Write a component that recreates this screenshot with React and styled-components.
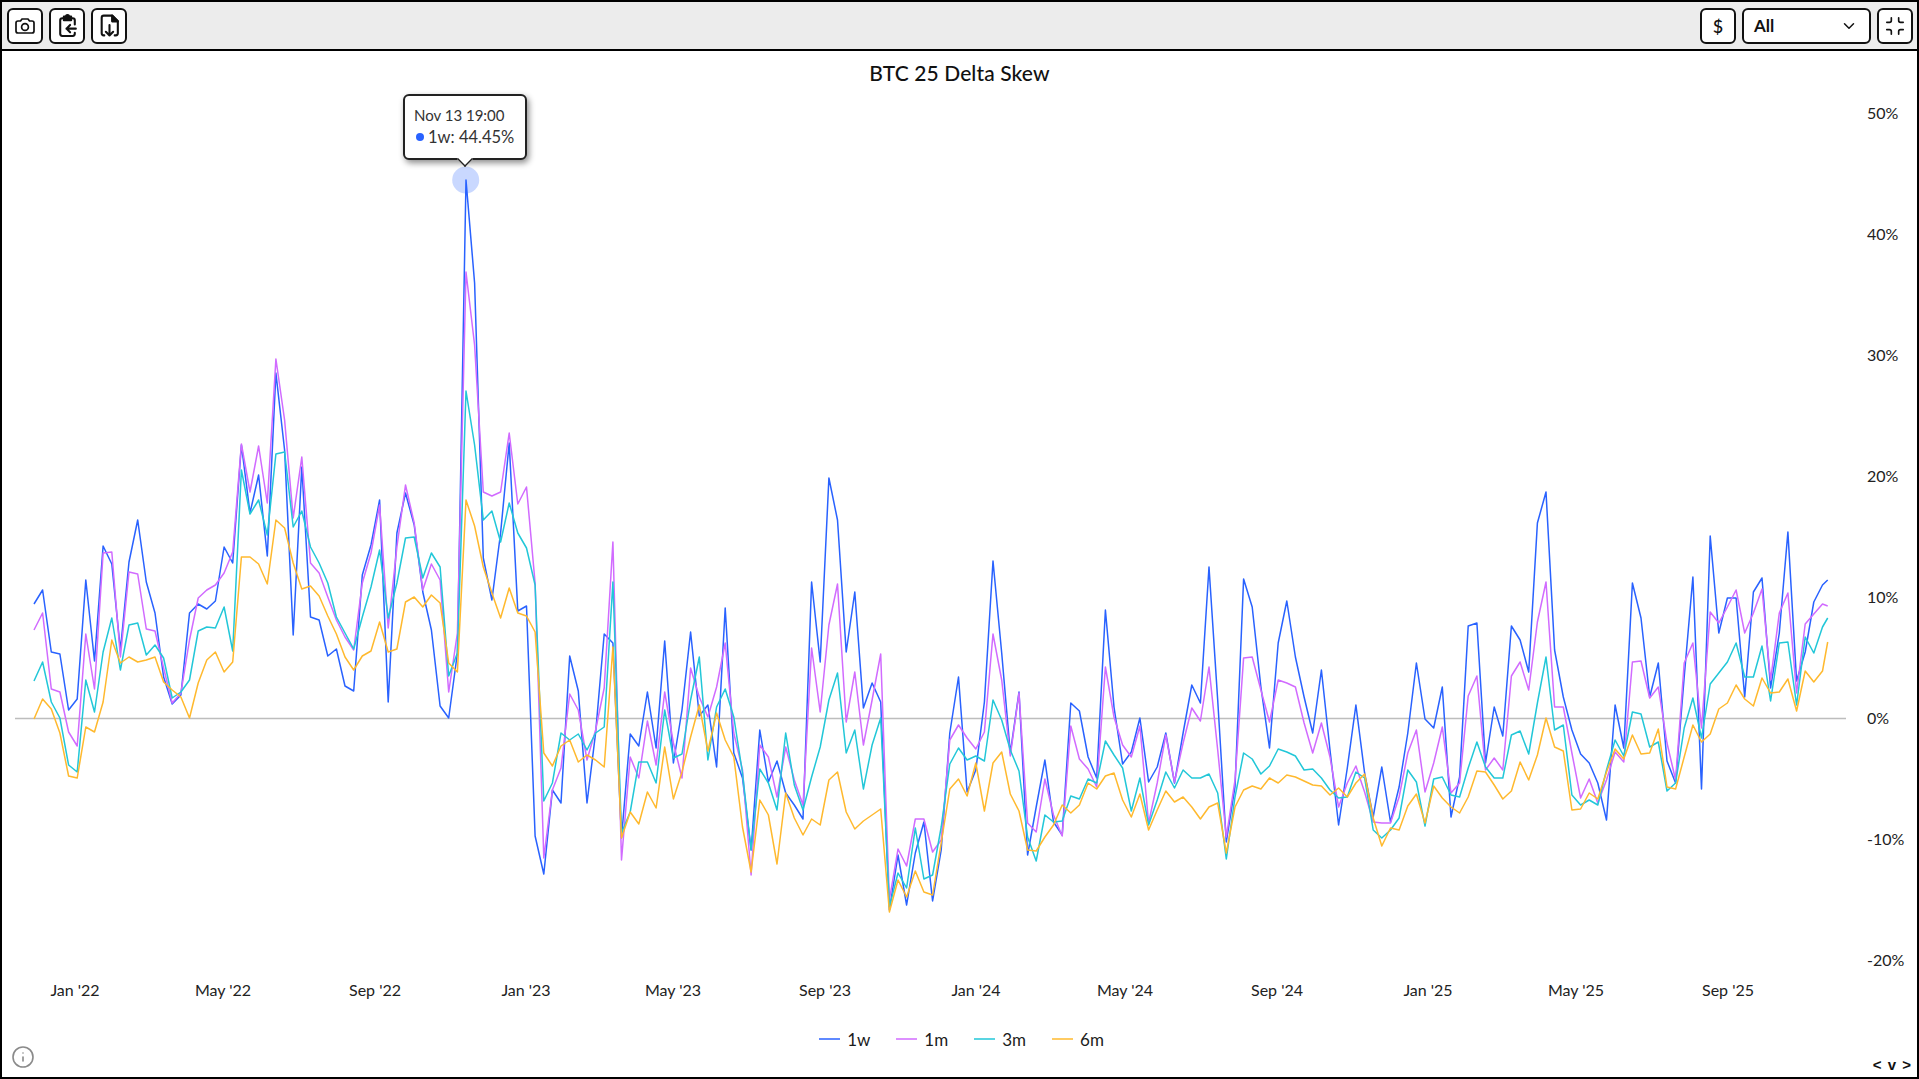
import React from 'react'
import styled, { createGlobalStyle } from 'styled-components'
import { ChevronDown, Info, Minimize } from 'lucide-react'

// y values are plot pixels, one point per week
const blue = [604,590,652,654,710,699,580,661,546,564,650,562,520,582,613,677,704,695,613,604,609,601,547,563,445,513,475,556,373,450,635,467,617,620,656,649,686,691,575,545,500,702,533,493,525,592,630,706,718,653,180,283,558,600,533,443,611,606,836,874,790,803,656,691,803,733,634,643,838,734,746,692,748,641,763,710,632,716,705,767,608,753,778,850,730,782,761,793,805,819,582,662,478,520,652,592,708,683,702,910,855,905,853,822,901,850,733,677,792,770,702,561,653,753,692,855,807,760,822,835,703,711,757,778,610,707,764,752,718,782,767,733,783,733,685,703,567,700,842,787,579,607,687,748,643,601,657,697,733,670,750,825,768,705,773,817,767,822,787,733,663,719,728,687,817,777,626,623,763,707,736,626,640,672,523,492,650,697,730,754,763,783,820,705,748,583,618,697,663,761,783,677,577,789,536,633,598,598,697,592,578,688,633,532,681,652,602,585,580]
const magenta = [630,613,689,692,732,746,634,689,553,552,657,572,574,629,631,668,703,693,640,598,590,585,573,552,444,492,446,503,359,420,518,457,563,573,597,620,637,650,583,553,505,628,547,485,523,590,564,580,692,633,272,345,492,496,492,433,504,487,583,858,790,768,694,710,760,730,688,542,860,757,778,721,765,692,743,778,668,697,717,687,643,733,770,875,745,757,797,747,780,805,648,712,625,584,722,672,745,700,654,900,849,866,819,819,852,840,740,725,738,749,732,634,680,756,693,823,832,779,815,836,726,759,769,787,667,717,745,757,726,823,783,735,782,743,708,721,667,750,837,780,658,657,690,722,680,683,687,723,753,723,757,807,783,766,792,822,823,823,797,753,730,792,763,727,793,783,696,676,770,758,770,676,662,690,622,582,707,707,753,798,779,803,780,752,762,662,661,698,687,743,780,663,643,728,612,623,607,590,633,613,589,680,613,593,693,624,614,604,606]
const teal = [681,662,702,718,765,772,680,712,652,618,670,625,623,655,645,658,698,692,680,631,627,628,607,651,470,514,500,535,454,452,527,511,547,563,583,617,633,649,617,587,550,618,583,538,537,578,553,567,676,653,391,445,520,511,542,503,533,548,585,801,783,733,740,734,750,733,727,582,833,812,762,762,783,710,758,754,700,657,760,707,689,717,773,850,769,783,810,733,785,810,777,747,700,673,753,730,789,745,718,907,873,888,828,879,875,827,764,748,760,756,761,700,720,750,771,837,861,815,822,821,796,799,779,783,741,755,768,811,778,825,800,772,788,770,778,778,774,793,859,797,753,759,774,766,749,752,756,770,769,778,790,798,797,772,778,830,838,830,818,770,782,826,779,777,795,797,768,742,767,778,778,735,731,754,703,657,730,725,795,805,800,805,770,740,756,712,714,747,742,791,783,728,698,738,684,673,662,643,677,677,646,701,643,642,705,637,653,627,618]
const orange = [719,699,709,733,776,778,727,732,702,640,663,657,662,660,657,682,690,697,718,683,660,652,672,662,557,557,564,584,520,528,563,589,586,596,616,634,657,670,656,651,622,652,649,602,597,607,595,603,663,672,500,526,567,593,618,588,613,616,632,753,766,746,740,762,755,760,767,647,838,812,824,792,808,747,799,772,737,705,751,713,740,757,827,872,800,815,864,793,818,835,819,825,780,772,812,829,821,815,809,912,880,897,871,892,895,843,789,779,796,763,811,763,752,794,811,850,851,837,825,805,813,805,783,789,776,773,800,817,794,830,810,791,802,797,807,819,807,803,853,807,790,786,789,778,783,775,777,781,785,786,795,788,797,783,774,818,846,828,830,806,794,823,786,798,807,813,797,771,772,785,799,791,762,780,755,718,747,751,810,809,793,799,772,749,759,735,754,753,729,787,789,757,725,742,734,709,703,685,699,706,678,693,692,679,711,671,682,671,642]

const series = [
  { name: '1w', color: '#2962ff', points: blue },
  { name: '1m', color: '#d16bff', points: magenta },
  { name: '3m', color: '#22c7d8', points: teal },
  { name: '6m', color: '#ffb92e', points: orange },
]

const xTicks = [
  ['Jan \'22', 75], ['May \'22', 223], ['Sep \'22', 375], ['Jan \'23', 526],
  ['May \'23', 673], ['Sep \'23', 825], ['Jan \'24', 976], ['May \'24', 1125],
  ['Sep \'24', 1277], ['Jan \'25', 1428], ['May \'25', 1576], ['Sep \'25', 1728],
]
const yTicks = [50, 40, 30, 20, 10, 0, -10, -20]

const toPath = (points) =>
  points
    .map((y, i) => {
      const x = i === points.length - 1 ? 1827.7 : 34 + i * 8.64
      return `${x.toFixed(1)},${y.toFixed(1)}`
    })
    .join(' ')

const CameraIcon = () => (
  <svg width="24" height="24" viewBox="0 0 24 24" fill="none" stroke="#111" strokeWidth="1.7" strokeLinejoin="round">
    <path d="M5 7h2.5L9 5h6l1.5 2H19a2 2 0 0 1 2 2v8a2 2 0 0 1-2 2H5a2 2 0 0 1-2-2V9a2 2 0 0 1 2-2z" />
    <circle cx="12" cy="13" r="3.4" />
  </svg>
)

const ClipboardIcon = () => (
  <svg width="25" height="25" viewBox="0 0 24 24" fill="none" stroke="#111" strokeWidth="2" strokeLinecap="round" strokeLinejoin="round">
    <path d="M8.5 5H7a2 2 0 0 0-2 2v13a2 2 0 0 0 2 2h10a2 2 0 0 0 2-2v-1M19 11V7a2 2 0 0 0-2-2h-1.5" />
    <path d="M8.5 3.5h2a1.5 1.5 0 0 1 3 0h2V7h-7z" fill="#111" />
    <path d="M20 15h-9M14.5 11.5 11 15l3.5 3.5" />
  </svg>
)

const FileIcon = () => (
  <svg width="25" height="25" viewBox="0 0 24 24" fill="none" stroke="#111" strokeWidth="2" strokeLinecap="round" strokeLinejoin="round">
    <path d="M7 21.5H6.500a2 2 0 0 1-2-2v-15a2 2 0 0 1 2-2h8l5.500 5.500v11.500a2 2 0 0 1-2 2H17" />
    <path d="M14.5 2.5V8H20z" fill="#111" />
    <path d="M12 11.500v10M8.500 18l3.500 3.500 3.500-3.500" />
  </svg>
)

export default function App() {
  return (
    <>
      <GlobalStyle />
      <Frame>
        <Toolbar>
          <ToolGroup>
            <ToolButton aria-label="Screenshot"><CameraIcon /></ToolButton>
            <ToolButton aria-label="Copy"><ClipboardIcon /></ToolButton>
            <ToolButton aria-label="Download"><FileIcon /></ToolButton>
          </ToolGroup>
          <ToolGroup>
            <ToolButton>$</ToolButton>
            <Select>
              All
              <ChevronDown size={18} strokeWidth={2} />
            </Select>
            <ToolButton aria-label="Exit full screen"><Minimize size={22} strokeWidth={1.8} /></ToolButton>
          </ToolGroup>
        </Toolbar>
        <Main>
          <Title>BTC 25 Delta Skew</Title>
          <Chart viewBox="2 95 1915 925">
            <line x1="15" x2="1846" y1="718.5" y2="718.5" stroke="#bdbdbd" strokeWidth="1.5" />
            {yTicks.map((tick) => (
              <AxisLabel key={tick} x="1867" y={718 - tick * 12.1 + 6}>{tick}%</AxisLabel>
            ))}
            {xTicks.map(([label, x]) => (
              <AxisLabel key={label} x={x} y="996" textAnchor="middle">{label}</AxisLabel>
            ))}
            {series.map((s) => (
              <polyline key={s.name} points={toPath(s.points)} fill="none" stroke={s.color} strokeWidth="1.5" strokeLinejoin="round" />
            ))}
            <circle cx="465.7" cy="180" r="13.5" fill="#2962ff" fillOpacity="0.25" />
          </Chart>
          <Tooltip>
            <TooltipDate>Nov 13 19:00</TooltipDate>
            <TooltipValue><Dot />1w: 44.45%</TooltipValue>
          </Tooltip>
          <Footer>
            <InfoButton><Info size={24} strokeWidth={1.6} /></InfoButton>
            <Legend>
              {series.map((s) => (
                <LegendItem key={s.name}>
                  <LegendLine $color={s.color} />
                  {s.name}
                </LegendItem>
              ))}
            </Legend>
            <Pager>&lt; v &gt;</Pager>
          </Footer>
        </Main>
      </Frame>
    </>
  )
}

const GlobalStyle = createGlobalStyle`
  html, body {
    margin: 0;
    padding: 0;
    background: #fff;
    overflow: hidden;
  }
  * {
    box-sizing: border-box;
  }
`

const Frame = styled.div`
  width: 100%;
  height: 100vh;
  display: flex;
  flex-direction: column;
  border: 2px solid #000;
  font-family: 'Lato', 'Liberation Sans', sans-serif;
  color: #1c1c1c;
`

const Toolbar = styled.div`
  height: 49px;
  flex-shrink: 0;
  display: flex;
  justify-content: space-between;
  align-items: center;
  padding: 0 4px 0 5px;
  background: #ececec;
  border-bottom: 2px solid #000;
`

const ToolGroup = styled.div`
  display: flex;
  align-items: center;
  gap: 6px;
`

const ToolButton = styled.button`
  width: 36px;
  height: 36px;
  padding: 0;
  display: flex;
  align-items: center;
  justify-content: center;
  background: #fff;
  border: 2px solid #111;
  border-radius: 6px;
  color: #111;
  font-family: inherit;
  font-size: 18px;
  font-weight: 500;
`

const Select = styled.div`
  width: 129px;
  height: 36px;
  display: flex;
  align-items: center;
  justify-content: space-between;
  padding: 0 11px 0 10px;
  background: #fff;
  border: 2px solid #111;
  border-radius: 6px;
  font-size: 17px;
  font-weight: 700;
  color: #111;
`

const Main = styled.div`
  position: relative;
  flex: 1;
  display: flex;
  flex-direction: column;
  min-height: 0;
`

const Title = styled.div`
  height: 44px;
  padding-bottom: 2px;
  flex-shrink: 0;
  display: flex;
  align-items: center;
  justify-content: center;
  font-size: 21px;
  font-weight: 500;
  letter-spacing: 0.1px;
  color: #111;
`

const Chart = styled.svg`
  display: block;
  width: 1915px;
  height: 925px;
  flex-shrink: 0;
`

const AxisLabel = styled.text`
  font-size: 16px;
  fill: #222;
  font-family: 'Lato', 'Liberation Sans', sans-serif;
`

const Tooltip = styled.div`
  position: absolute;
  left: 401px;
  top: 43px;
  width: 124px;
  height: 66px;
  padding: 8px 9px;
  background: #fff;
  border: 2px solid #222;
  border-radius: 6px;
  box-shadow: 2px 3px 6px rgba(0, 0, 0, 0.45);
  font-size: 17px;
  line-height: 22px;
  color: #333;

  &::after {
    content: '';
    position: absolute;
    left: 52px;
    bottom: -9px;
    width: 14px;
    height: 14px;
    background: #fff;
    border-right: 2px solid #222;
    border-bottom: 2px solid #222;
    transform: rotate(45deg) scale(0.7);
  }
`

const TooltipDate = styled.div`
  font-size: 15px;
  white-space: nowrap;
`

const TooltipValue = styled.div`
  display: flex;
  align-items: center;
  gap: 4px;
  white-space: nowrap;
  font-size: 16.5px;
`

const Dot = styled.span`
  flex-shrink: 0;
  width: 8px;
  height: 8px;
  margin-left: 2px;
  border-radius: 50%;
  background: #2962ff;
`

const Footer = styled.div`
  flex: 1;
  display: grid;
  grid-template-columns: 1fr auto 1fr;
  padding: 0 5px 0 9px;
`

const InfoButton = styled.div`
  align-self: end;
  margin-bottom: 8px;
  color: #8a8a8a;
  display: flex;
`

const Legend = styled.div`
  display: flex;
  align-items: center;
  gap: 26px;
  height: 38px;
`

const LegendItem = styled.div`
  display: flex;
  align-items: center;
  gap: 7px;
  font-size: 17px;
  color: #1c1c1c;
`

const LegendLine = styled.span`
  width: 21px;
  height: 2px;
  background: ${(p) => p.$color};
  opacity: 0.75;
`

const Pager = styled.div`
  justify-self: end;
  align-self: end;
  margin-bottom: 4px;
  font-family: 'Liberation Sans', sans-serif;
  font-size: 15px;
  font-weight: 700;
  letter-spacing: 1px;
  color: #111;
`
